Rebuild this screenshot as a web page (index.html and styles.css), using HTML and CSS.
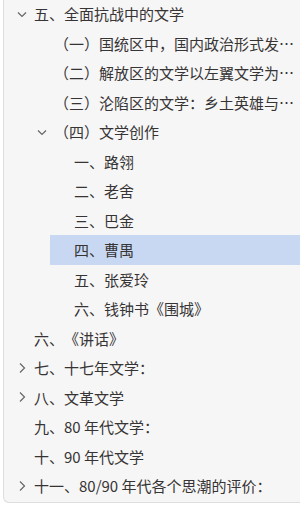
FILE: index.html
```html
<!DOCTYPE html>
<html lang="zh-CN">
<head>
  <meta charset="UTF-8">
  <meta name="viewport" content="width=device-width, initial-scale=1.0">
  <title>大纲</title>
  <link rel="stylesheet" href="styles.css">
</head>
<body>
  <div class="outline">
    <div class="row lvl-0"><span class="chev down"></span><span class="label">五、全面抗战中的文学</span></div>
    <div class="row lvl-1"><span class="chev"></span><span class="label">（一）国统区中，国内政治形式发生变化</span></div>
    <div class="row lvl-1"><span class="chev"></span><span class="label">（二）解放区的文学以左翼文学为主体</span></div>
    <div class="row lvl-1"><span class="chev"></span><span class="label">（三）沦陷区的文学：乡土英雄与传奇</span></div>
    <div class="row lvl-1"><span class="chev down"></span><span class="label">（四）文学创作</span></div>
    <div class="row lvl-2"><span class="chev"></span><span class="label">一、路翎</span></div>
    <div class="row lvl-2"><span class="chev"></span><span class="label">二、老舍</span></div>
    <div class="row lvl-2"><span class="chev"></span><span class="label">三、巴金</span></div>
    <div class="row lvl-2 active"><span class="chev"></span><span class="label">四、曹禺</span></div>
    <div class="row lvl-2"><span class="chev"></span><span class="label">五、张爱玲</span></div>
    <div class="row lvl-2"><span class="chev"></span><span class="label">六、钱钟书《围城》</span></div>
    <div class="row lvl-0"><span class="chev"></span><span class="label">六、《讲话》</span></div>
    <div class="row lvl-0"><span class="chev right"></span><span class="label">七、十七年文学：</span></div>
    <div class="row lvl-0"><span class="chev right"></span><span class="label">八、文革文学</span></div>
    <div class="row lvl-0"><span class="chev"></span><span class="label">九、80 年代文学：</span></div>
    <div class="row lvl-0"><span class="chev"></span><span class="label">十、90 年代文学</span></div>
    <div class="row lvl-0"><span class="chev right"></span><span class="label">十一、80/90 年代各个思潮的评价：</span></div>
  </div>

  <script>
    const down = '<svg width="16" height="16" viewBox="0 0 16 16"><path d="M4 6.5 L8 10.5 L12 6.5" fill="none" stroke="#666" stroke-width="1.2"/></svg>';
    const right = '<svg width="16" height="16" viewBox="0 0 16 16"><path d="M6 3.5 L10.5 8 L6 12.5" fill="none" stroke="#666" stroke-width="1.2"/></svg>';
    document.querySelectorAll('.chev.down').forEach(el => el.innerHTML = down);
    document.querySelectorAll('.chev.right').forEach(el => el.innerHTML = right);
  </script>
</body>
</html>
```

FILE: styles.css
```css
body {
  margin: 0;
  background: #fff;
  font-family: "Noto Sans CJK SC", "Noto Sans", sans-serif;
  color: #363434;
}
.outline {
  margin-left: 3px;
  width: 296px;
  height: 502px;
  border-left: 1px solid #dedede;
  border-bottom: 1px solid #dedede;
  border-bottom-left-radius: 6px;
  background: #f6f6f6;
  overflow: hidden;
}
.row {
  display: flex;
  align-items: center;
  height: 29.5px;
  padding-left: 4px;
  font-size: 15px;
  white-space: nowrap;
  text-spacing-trim: space-all;
}
.row:first-child {
  margin-top: -1px;
}
.lvl-0 { margin-left: 6px; }
.lvl-1 { margin-left: 26px; }
.lvl-2 { margin-left: 46px; }
.active {
  background: #c8d8f2;
}
.chev {
  flex: 0 0 16px;
  width: 16px;
  height: 16px;
  margin-right: 4px;
}
.chev svg {
  display: block;
}
.label {
  overflow: hidden;
  text-overflow: ellipsis;
  min-width: 0;
}
```
